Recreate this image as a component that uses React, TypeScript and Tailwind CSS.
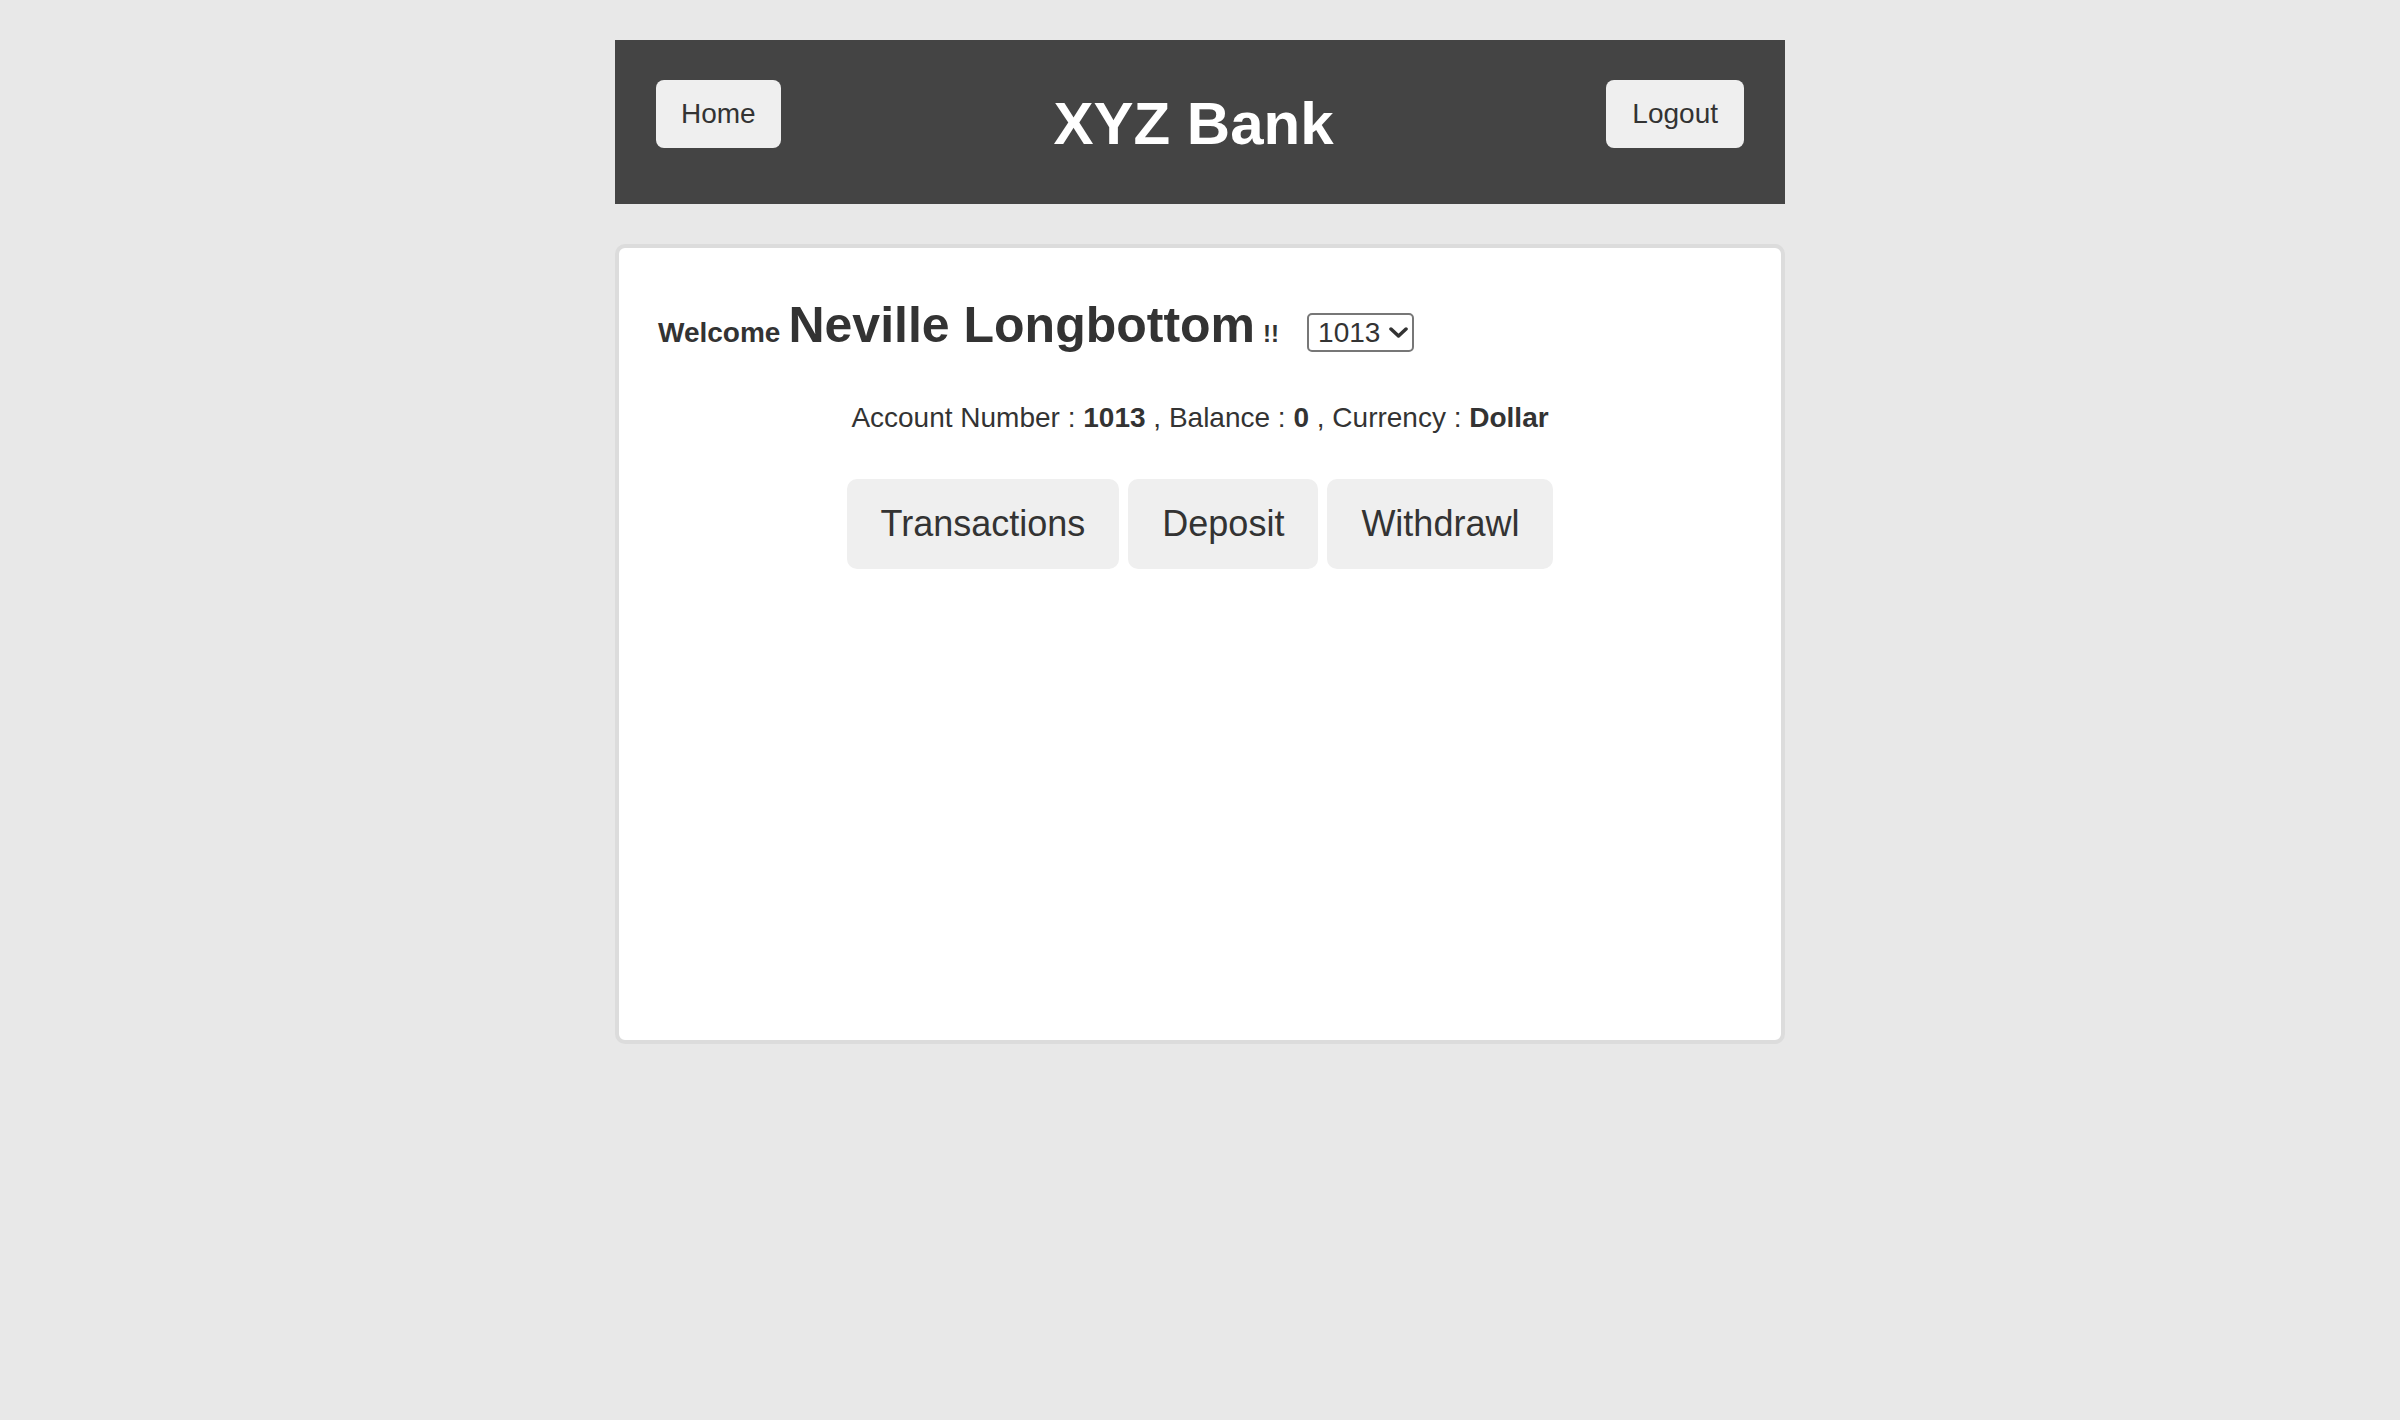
import { useState } from 'react';

const accounts = ['1013', '1014', '1015'];

export default function App() {
    const [account] = useState(accounts[0]);
    return (
        <div className="min-h-screen bg-[#e8e8e8] pt-10 text-[#333] [font-family:'Liberation_Sans',Arial,sans-serif]">
            <div className="mx-auto flex h-[164px] w-[1170px] items-start justify-between bg-[#444] px-[41px] pt-10">
                <button className="rounded-lg bg-[#efefef] px-[25px] py-[18px] text-[28px] leading-[32px] text-[#333]">Home</button>
                <h1 className="mt-[14px] text-[60px] font-bold leading-[60px] text-white">XYZ Bank</h1>
                <button className="rounded-lg bg-[#efefef] px-[26px] py-[18px] text-[28px] leading-[32px] text-[#333]">Logout</button>
            </div>
            <div className="mx-auto mt-[40px] h-[800px] w-[1170px] rounded-[10px] border-4 border-[#dcdcdc] bg-white px-[39px] pt-[48px]">
                <div className="flex items-baseline leading-[58px]">
                    <span className="text-[28px] font-bold">Welcome</span>
                    <span className="ml-[8px] text-[50px] font-bold">Neville Longbottom</span>
                    <span className="ml-[8px] text-[24px] font-bold">!!</span>
                    <div className="ml-[28px] inline-flex h-[39px] w-[107px] items-center gap-[9px] rounded-[5px] border-2 border-[#777] pl-[9px] text-[28px] leading-[35px]">
                        <span>{account}</span>
                        <svg width="19" height="11" viewBox="0 0 19 11" fill="none" stroke="#333" strokeWidth="3.5" strokeLinecap="round" strokeLinejoin="round">
                            <path d="M2 2l7.5 7 7.5-7" />
                        </svg>
                    </div>
                </div>
                <p className="mt-[38px] text-center text-[28px] leading-[34px]">
                    Account Number : <b>{account}</b> , Balance : <b>0</b> , Currency : <b>Dollar</b>
                </p>
                <div className="mt-[44px] flex justify-center gap-[9px]">
                    <button className="rounded-[10px] bg-[#efefef] px-[34px] py-[24px] text-[36px] leading-[42px]">Transactions</button>
                    <button className="rounded-[10px] bg-[#efefef] px-[34px] py-[24px] text-[36px] leading-[42px]">Deposit</button>
                    <button className="rounded-[10px] bg-[#efefef] px-[34px] py-[24px] text-[36px] leading-[42px]">Withdrawl</button>
                </div>
            </div>
        </div>
    );
}
